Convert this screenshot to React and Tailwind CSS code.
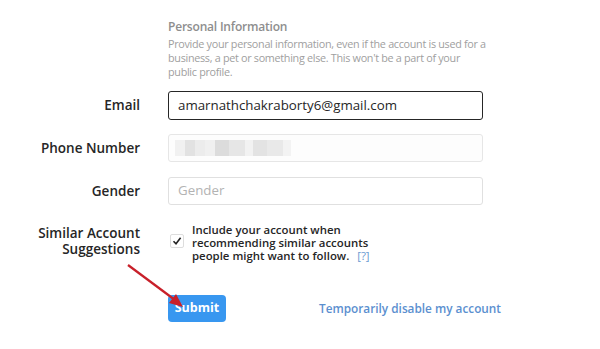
import React from "react";

export default function App() {
  return (
    <div
      className="relative w-[600px] h-[349px] bg-white overflow-hidden"
      style={{ fontFamily: '"Open Sans", "Noto Sans", sans-serif' }}
    >
      <div className="grid grid-cols-[140px_315px] gap-x-[28px] pt-[18px]">
        {/* Intro */}
        <div />
        <div>
          <h2 className="text-[12px] tracking-[-0.2px] font-semibold text-[#8e8e8e] leading-[18px]">
            Personal Information
          </h2>
          <p className="text-[10.8px] tracking-[-0.3px] text-[#a0a0a0] leading-[14px] mt-[1px] whitespace-nowrap">
            Provide your personal information, even if the account is used for a
            <br />
            business, a pet or something else. This won't be a part of your
            <br />
            public profile.
          </p>
        </div>

        {/* Email */}
        <label className="text-right text-[13.5px] font-semibold text-[#262626] mt-[12px] leading-[29px]">
          Email
        </label>
        <div className="mt-[12px] h-[29px] border-[1.5px] border-[#262626] rounded-[3px] px-[9px] flex items-center text-[13.3px] text-[#262626]">
          amarnathchakraborty6@gmail.com
        </div>

        {/* Phone */}
        <label className="text-right text-[13.5px] font-semibold text-[#262626] mt-[14px] leading-[28px]">
          Phone Number
        </label>
        <div className="mt-[14px] h-[28px] border border-[#e6e6e6] rounded-[3px] bg-[#fdfdfd] flex items-center pl-[6px]">
          <div className="flex h-[16px]">
            <div className="w-[10px] bg-[#f1f1f1]" />
            <div className="w-[10px] bg-[#e2e2e2]" />
            <div className="w-[10px] bg-[#ececec]" />
            <div className="w-[10px] bg-[#f0f0f0]" />
            <div className="w-[14px] bg-[#dcdcdc]" />
            <div className="w-[16px] bg-[#e6e6e6]" />
            <div className="w-[8px] bg-[#f2f2f2]" />
            <div className="w-[14px] bg-[#e3e3e3]" />
            <div className="w-[16px] bg-[#e9e9e9]" />
            <div className="w-[8px] bg-[#f3f3f3]" />
          </div>
        </div>

        {/* Gender */}
        <label className="text-right text-[13.5px] font-semibold text-[#262626] mt-[15px] leading-[28px]">
          Gender
        </label>
        <div className="mt-[15px] h-[28px] border border-[#e0e0e0] rounded-[3px] px-[9px] flex items-center text-[13.3px] text-[#b3b3b3]">
          Gender
        </div>

        {/* Suggestions */}
        <label className="text-right text-[13.5px] font-semibold text-[#262626] mt-[20px] leading-[16px]">
          Similar Account
          <br />
          Suggestions
        </label>
        <div className="mt-[18px] flex gap-[8px]">
          <div className="mt-[11px] w-[14px] h-[14px] border border-[#ddd] rounded-[2px] flex items-center justify-center shrink-0 ml-[2px]">
            <svg width="10" height="10" viewBox="0 0 10 10">
              <path d="M1.5 5.2 L4 7.8 L8.6 1.8" fill="none" stroke="#222" strokeWidth="1.6" />
            </svg>
          </div>
          <p className="text-[11.4px] font-semibold text-[#262626] leading-[13px] whitespace-nowrap">
            Include your account when
            <br />
            recommending similar accounts
            <br />
            people might want to follow.{" "}
            <span className="text-[#6b9ad2] font-normal ml-[5px]">[?]</span>
          </p>
        </div>

        {/* Actions */}
        <div />
        <div className="mt-[33px] flex items-center">
          <button className="shrink-0 h-[27px] w-[58px] bg-[#3897f0] rounded-[4px] text-white text-[12.5px] font-bold">
            Submit
          </button>
          <a className="ml-[93px] whitespace-nowrap text-[11.8px] font-semibold text-[#5b8fcf]">
            Temporarily disable my account
          </a>
        </div>
      </div>

      {/* Annotation arrow */}
      <svg className="absolute left-0 top-0 pointer-events-none" width="600" height="349">
        <line x1="128" y1="265" x2="175" y2="300" stroke="#c8202a" strokeWidth="2.2" />
        <polygon points="183,307 169,303 176,294" fill="#c8202a" />
      </svg>
    </div>
  );
}
